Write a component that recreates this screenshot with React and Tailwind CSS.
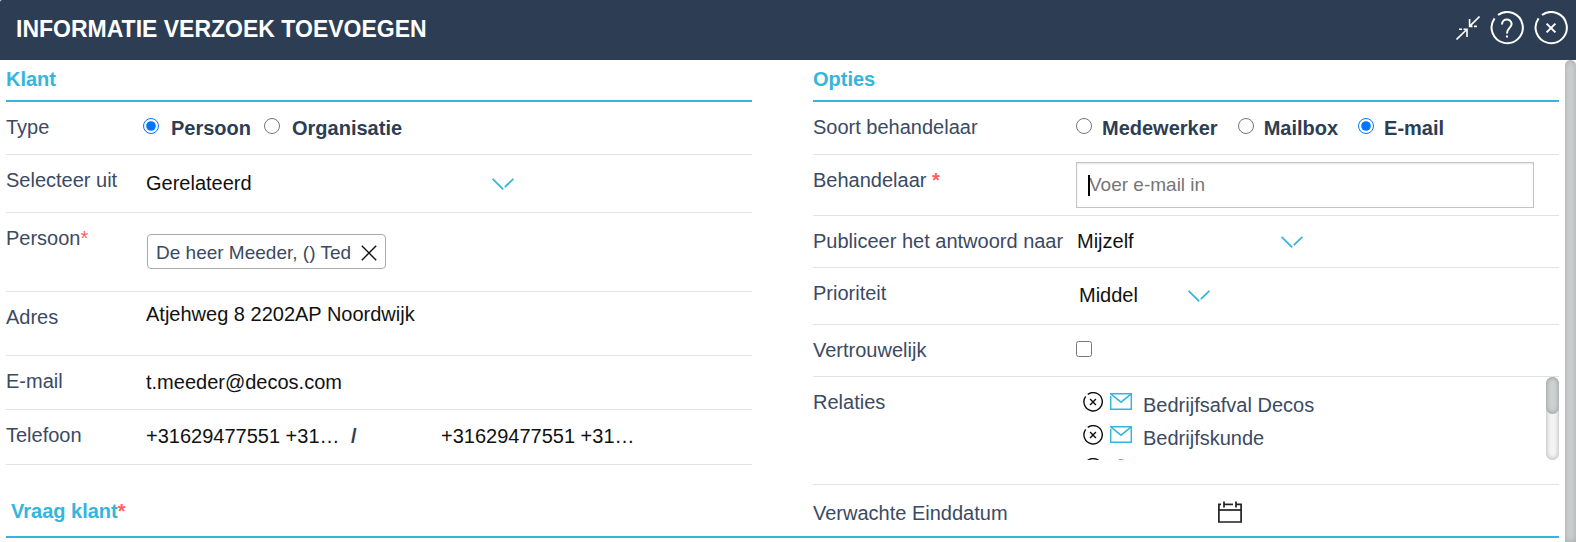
import { useState } from "react";

function Chevron() {
  return (
    <svg className="w-[22px] h-3 mt-px shrink-0 pointer-events-none" viewBox="0 0 22 12" fill="none" stroke="#36b5dc" strokeWidth="1.8">
      <path d="M0.6 0.8 L11.2 11.4" />
      <path d="M12.8 9.2 L21.4 0.8" />
    </svg>
  );
}

function CircleClose({ className, strokeWidth, cross }) {
  return (
    <svg className={className} viewBox="0 0 34 34" fill="none" stroke="currentColor" strokeWidth={strokeWidth}>
      <path d="M8 4 A15.6 15.6 0 1 1 4.6 7.4" />
      <path d={cross} />
    </svg>
  );
}

function MailIcon() {
  return (
    <svg className="w-[22px] h-[17px]" viewBox="0 0 22 17" fill="none" stroke="#36b5dc" strokeWidth="1.5">
      <path d="M0 0.8 H21.3 V16.2 H0.7 V3" />
      <path d="M0.7 0.8 L11 9.2 L21.3 0.8" />
    </svg>
  );
}

function PersonIcon() {
  return (
    <svg className="w-[22px] h-[20px]" viewBox="0 0 22 20" fill="none" stroke="#36b5dc" strokeWidth="1.5">
      <circle cx="11" cy="5.5" r="4.7" />
      <path d="M2 19.5 C2 9.5 20 9.5 20 19.5" />
    </svg>
  );
}

function CalendarIcon() {
  return (
    <svg className="w-6 h-[22px]" viewBox="0 0 24 22" fill="none" stroke="#222" strokeWidth="1.7">
      <path d="M3 3.4 H0.9 V21 H23.1 V3.4 H18" />
      <path d="M6 3.4 H15" />
      <path d="M6 0.4 V6.4 M18 0.4 V6.4" />
      <path d="M0.9 9 H23.1" />
    </svg>
  );
}

function Row({ label, htmlFor, required, className = "", children }) {
  return (
    <div className={`flex items-start border-b border-[#e2e2e2] ${className}`}>
      <label htmlFor={htmlFor} className="shrink-0 w-[var(--label)] pt-[13px] whitespace-nowrap">
        {label}
        {required}
      </label>
      {children}
    </div>
  );
}

function SectionTitle({ children }) {
  return <h2 className="pt-[7px] h-[42px] border-b-2 border-[#36b5dc] font-bold text-[#36b5dc]">{children}</h2>;
}

function Radio({ name, label, checked, onChange, className }) {
  return (
    <label className={`flex items-start font-bold text-[#2d3d54] ${className}`}>
      <input type="radio" name={name} checked={checked} onChange={onChange} className="w-4 h-4 mt-[2px] shrink-0" />
      {label}
    </label>
  );
}

function Select({ id, options, className }) {
  return (
    <div className={`flex items-center text-[#111] ${className}`}>
      <select id={id} className="appearance-none grow min-w-0 bg-transparent outline-none leading-6">
        {options.map((o) => (
          <option key={o}>{o}</option>
        ))}
      </select>
      <Chevron />
    </div>
  );
}

const relations = [
  { id: 1, name: "Bedrijfsafval Decos", icon: MailIcon },
  { id: 2, name: "Bedrijfskunde", icon: MailIcon },
  { id: 3, name: "", icon: PersonIcon },
];

export default function App() {
  const [type, setType] = useState("Persoon");
  const [handler, setHandler] = useState("E-mail");
  const [email, setEmail] = useState("");

  return (
    <div className="h-screen flex flex-col overflow-hidden bg-white text-xl leading-6 text-[#3b4a63] font-['Liberation_Sans',Arial,sans-serif]">
      {/* Title bar */}
      <header className="shrink-0 h-[60px] flex items-center pl-4 pr-2 pb-[2px] bg-[#2d3d54] text-white rounded-tl-[2px]">
        <h1 className="grow text-[23px] font-bold">INFORMATIE VERZOEK TOEVOEGEN</h1>
        <div className="flex items-center gap-[10px] pb-[2px]">
          <button aria-label="Verkleinen">
            <svg className="w-6 h-6 block" viewBox="0 0 24 24" fill="none" stroke="currentColor" strokeWidth="1.6">
              <path d="M0.5 23.5 L11 13.2 M11 21 V13.2 H7.5 M6 13.2 H3" />
              <path d="M23.5 0.5 L13.6 10.4 M13.6 3 V10.4 H16.5 M18 10.4 H21" />
            </svg>
          </button>
          <button aria-label="Help">
            <svg className="w-[34px] h-[34px] block" viewBox="0 0 34 34" fill="none" stroke="currentColor" strokeWidth="2">
              <path d="M8 4 A15.6 15.6 0 1 1 4.6 7.4" />
              <path d="M12 13.5 C12 6.8 21.6 7.2 21.6 13 C21.6 17 17 17 17 22.4" />
              <path d="M17 24.4 V26.4" />
            </svg>
          </button>
          <button aria-label="Sluiten">
            <CircleClose className="w-[34px] h-[34px] block" strokeWidth="2" cross="M12.6 12.6 L21.4 21.4 M21.4 12.6 L12.6 21.4" />
          </button>
        </div>
      </header>

      <div className="grow min-h-0 flex">
        <main className="grow min-w-0 px-[6px]">
          <div className="grid grid-cols-2 gap-x-[61px] border-b-2 border-[#36b5dc]">
            {/* Customer */}
            <section className="[--label:137px]">
              <SectionTitle>Klant</SectionTitle>
              <Row label="Type" className="min-h-[53px]">
                <div className="flex pt-[14px]">
                  <Radio name="type" label="Persoon" className="gap-3 mr-[13px]" checked={type === "Persoon"} onChange={() => setType("Persoon")} />
                  <Radio name="type" label="Organisatie" className="gap-3" checked={type === "Organisatie"} onChange={() => setType("Organisatie")} />
                </div>
              </Row>
              <Row label="Selecteer uit" htmlFor="source" className="min-h-[58px]">
                <Select id="source" options={["Gerelateerd", "Alle"]} className="pt-4 ml-[3px] w-[368px]" />
              </Row>
              <Row label="Persoon" required={<span className="text-[#ff5f63]">*</span>} className="min-h-[79px]">
                <div className="flex items-center mt-[21px] ml-1 h-[35px] pt-[2px] px-2 gap-[10px] border border-[#aaa] rounded text-[19px]">
                  De heer Meeder, () Ted
                  <button aria-label="Verwijderen">
                    <svg className="w-4 h-4 block" viewBox="0 0 16 16" fill="none" stroke="#111" strokeWidth="1.4">
                      <path d="M0.8 0.8 L15.2 15.2 M15.2 0.8 L0.8 15.2" />
                    </svg>
                  </button>
                </div>
              </Row>
              <Row label="Adres" className="min-h-[64px]">
                <span className="pt-[10px] ml-[3px] text-[#111]">Atjehweg 8 2202AP Noordwijk</span>
              </Row>
              <Row label="E-mail" className="min-h-[54px]">
                <span className="pt-[14px] ml-[3px] text-[#111]">t.meeder@decos.com</span>
              </Row>
              <Row label="Telefoon" className="min-h-[55px]">
                <div className="flex pt-[14px] ml-[3px] text-[#111]">
                  <span className="w-[205px]">+31629477551 +31…</span>
                  <span className="w-[90px] font-bold text-[#2d3d54]">/</span>
                  <span>+31629477551 +31…</span>
                </div>
              </Row>
              <h2 className="pt-[34px] pl-[5px] font-bold text-[#36b5dc]">
                Vraag klant<span className="text-[#ff5f63]">*</span>
              </h2>
            </section>

            {/* Options */}
            <section className="[--label:263px]">
              <SectionTitle>Opties</SectionTitle>
              <Row label="Soort behandelaar" className="min-h-[53px]">
                <div className="flex pt-[14px]">
                  <Radio name="handler" label="Medewerker" className="gap-[10px] mr-5" checked={handler === "Medewerker"} onChange={() => setHandler("Medewerker")} />
                  <Radio name="handler" label="Mailbox" className="gap-[10px] mr-5" checked={handler === "Mailbox"} onChange={() => setHandler("Mailbox")} />
                  <Radio name="handler" label="E-mail" className="gap-[10px]" checked={handler === "E-mail"} onChange={() => setHandler("E-mail")} />
                </div>
              </Row>
              <Row label="Behandelaar " htmlFor="email" required={<span className="font-bold text-[#ff5f63]">*</span>} className="min-h-[61px]">
                <div className="relative grow mt-[7px] mr-[25px]">
                  <input
                    id="email"
                    type="email"
                    placeholder="Voer e-mail in"
                    value={email}
                    onChange={(e) => setEmail(e.target.value)}
                    className="block w-full h-[46px] px-3 border border-[#c4c4c4] shadow-[inset_0_1px_2px_rgba(0,0,0,0.1)] text-[19px] placeholder:text-[#757575] outline-none caret-transparent"
                  />
                  {email === "" && <span className="absolute left-3 top-[13px] w-[2px] h-[21px] bg-black" />}
                </div>
              </Row>
              <Row label="Publiceer het antwoord naar" htmlFor="publish" className="min-h-[52px]">
                <Select id="publish" options={["Mijzelf", "Klant"]} className="pt-[13px] ml-px w-[226px]" />
              </Row>
              <Row label="Prioriteit" htmlFor="priority" className="min-h-[57px]">
                <Select id="priority" options={["Middel", "Hoog", "Laag"]} className="pt-[15px] ml-[3px] w-[131px]" />
              </Row>
              <Row label="Vertrouwelijk" htmlFor="confidential" className="min-h-[52px]">
                <input id="confidential" type="checkbox" className="w-4 h-4 mt-4" />
              </Row>
              <Row label="Relaties" className="min-h-[108px]">
                <div className="grow flex h-[83px] overflow-hidden">
                  <ul className="grow pl-[7px] pt-[15px]">
                    {relations.map(({ id, name, icon: Icon }) => (
                      <li key={id} className="flex h-[33px]">
                        <button aria-label="Relatie verwijderen" className="w-5 h-5 mr-[7px] text-[#111]">
                          <CircleClose className="w-5 h-5 block" strokeWidth="2.4" cross="M12 12 L22 22 M22 12 L12 22" />
                        </button>
                        <span className="mt-px mr-[11px]">
                          <Icon />
                        </span>
                        {name && <span className="pt-px">{name}</span>}
                      </li>
                    ))}
                  </ul>
                  <div className="w-[13px] rounded-full bg-[#f4f4f4] shadow-[inset_0_0_5px_rgba(0,0,0,0.3)]">
                    <div className="h-[37px] rounded-full bg-[#cdd1d2] shadow-[inset_0_0_5px_rgba(0,0,0,0.3)]" />
                  </div>
                </div>
              </Row>
              <div className="flex h-[51px]">
                <label htmlFor="due" className="w-[405px] pt-4">Verwachte Einddatum</label>
                <button id="due" aria-label="Kies datum" className="mt-4 self-start">
                  <CalendarIcon />
                </button>
              </div>
            </section>
          </div>
        </main>

        {/* Page scrollbar */}
        <div className="w-[11px] shrink-0 rounded-t-md bg-[#cdd1d2] shadow-[inset_0_0_6px_rgba(0,0,0,0.2)]" />
      </div>
    </div>
  );
}
